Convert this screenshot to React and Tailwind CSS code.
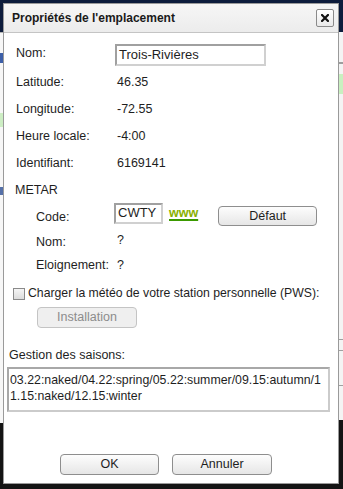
const btn =
  "flex items-center justify-center rounded-[4px] border border-[#8e8e8e] bg-gradient-to-b from-[#fdfdfd] to-[#e6e6e6] text-[12.5px] text-[#1e1e1e]";

const Row = ({ label, value, indent = "pl-[12px]", width = "w-[101px]" }) => (
  <div className={`flex h-[27px] leading-[18px] ${indent}`}>
    <div className={width}>{label}</div>
    <div>{value}</div>
  </div>
);

const LeftStrip = () => (
  <div className="w-[3px] flex flex-col">
    <div className="h-[29px] bg-[#0d1c3c]" />
    <div className="h-[1px] bg-[#b5b5b5]" />
    <div className="h-[20px] bg-[#f7f7f7]" />
    <div className="h-[10px] bg-[#3d5fa8]" />
    <div className="h-[50px] bg-[#f7f7f7]" />
    <div className="h-[14px] bg-[#cdeec4]" />
    <div className="h-[60px] bg-[#f7f7f7]" />
    <div className="h-[8px] bg-[#5570a8]" />
    <div className="h-[228px] bg-[#f7f7f7]" />
    <div className="flex-1 bg-[#141414]" />
  </div>
);

const RightStrip = () => (
  <div className="w-[4px] flex flex-col">
    <div className="h-[29px] bg-[#0d1c3c]" />
    <div className="h-[30px] bg-[#f4f4f4]" />
    <div className="h-[2px] bg-[#9e9e9e]" />
    <div className="h-[10px] bg-[#f4f4f4]" />
    <div className="h-[20px] bg-[#c9f0c0]" />
    <div className="h-[245px] bg-[#f4f4f4]" />
    <div className="h-[1px] bg-[#a0a0a0]" />
    <div className="h-[10px] bg-[#f4f4f4]" />
    <div className="h-[1px] bg-[#a0a0a0]" />
    <div className="h-[34px] bg-[#f4f4f4]" />
    <div className="h-[1px] bg-[#a0a0a0]" />
    <div className="h-[34px] bg-[#f4f4f4]" />
    <div className="flex-1 bg-[#141414]" />
  </div>
);

const Dialog = () => (
  <div className="w-[336px] h-[481px] border border-[#9a9a9a] bg-white flex flex-col text-[12.5px] text-[#1e1e1e]">
    <div className="h-[29px] shrink-0 flex items-center justify-between pl-[8px] pr-[4px] bg-gradient-to-b from-[#f6f6f6] to-[#ececec] border-b border-[#c4c4c4]">
      <span className="text-[12px] font-bold text-[#1a1a1a]">Propriétés de l'emplacement</span>
      <button className="w-[18px] h-[18px] mb-[1px] flex items-center justify-center rounded-[2px] border border-[#8a8a8a] bg-gradient-to-b from-white to-[#e9e9e9]">
        <svg width="8" height="8" viewBox="0 0 8 8">
          <path d="M1 1 L7 7 M7 1 L1 7" stroke="#111" strokeWidth="2.2" strokeLinecap="square" />
        </svg>
      </button>
    </div>

    <div className="flex flex-col">
      <div className="flex h-[22px] mt-[11px] pl-[12px]">
        <div className="w-[99px] leading-[18px]">Nom:</div>
        <div className="w-[151px] h-[22px] border-2 border-t-[#a0a0a0] border-l-[#a0a0a0] border-b-[#d0d0d0] border-r-[#d0d0d0] pl-[2px] text-[13px] leading-[18px]">
          Trois-Rivières
        </div>
      </div>

      <div className="mt-[7px]">
        <Row label="Latitude:" value="46.35" />
        <Row label="Longitude:" value="-72.55" />
        <Row label="Heure locale:" value="-4:00" />
        <Row label="Identifiant:" value="6169141" />
        <div className="h-[18px] leading-[18px] pl-[11px]">METAR</div>
      </div>

      <div className="flex h-[21px] mt-[4px] pl-[32px]">
        <div className="w-[78px] leading-[18px] pt-[5px]">Code:</div>
        <div className="w-[49px] h-[21px] border-2 border-t-[#a0a0a0] border-l-[#a0a0a0] border-b-[#d0d0d0] border-r-[#d0d0d0] pl-[2px] text-[13px] leading-[15px]">
          CWTY
        </div>
        <a className="ml-[6px] leading-[20px] font-bold text-[#8ab000] underline decoration-[#3b9a00] decoration-2 underline-offset-2">
          www
        </a>
        <button className={`${btn} ml-[20px] mt-[3px] w-[99px] h-[20px]`}>Défaut</button>
      </div>

      <div className="flex h-[18px] mt-[9px] pl-[32px] leading-[18px]">
        <div className="w-[81px]">Nom:</div>
        <div className="-mt-[2px]">?</div>
      </div>
      <div className="flex h-[18px] mt-[5px] pl-[32px] leading-[18px]">
        <div className="w-[81px]">Eloignement:</div>
        <div>?</div>
      </div>

      <div className="flex items-center h-[18px] mt-[10px] pl-[9px] leading-[18px]">
        <div className="w-[12px] h-[12px] mt-[1px] border border-[#8a8a8a] bg-gradient-to-b from-[#f5f5f5] to-[#dcdcdc]" />
        <span className="ml-[3px] text-[12.25px]">Charger la météo de votre station personnelle (PWS):</span>
      </div>

      <div className="mt-[5px] ml-[33px]">
        <button className="flex items-center justify-center w-[100px] h-[21px] rounded-[4px] border border-[#c4c4c4] bg-[#efefef] text-[12.5px] text-[#8c8c8c]">
          Installation
        </button>
      </div>

      <div className="h-[18px] leading-[18px] mt-[18px] pl-[5px]">Gestion des saisons:</div>
      <div className="w-[323px] h-[45px] mt-[3px] ml-[3px] border-2 border-t-[#a8a8a8] border-l-[#a8a8a8] border-b-[#cbcbcb] border-r-[#cbcbcb] pl-[1px] pt-[3px] text-[12.35px] leading-[16px] text-[#1e1e1e]">
        03.22:naked/04.22:spring/05.22:summer/09.15:autumn/1
        <br />
        1.15:naked/12.15:winter
      </div>

      <div className="flex gap-[13px] mt-[42px] ml-[56px]">
        <button className={`${btn} w-[99px] h-[21px]`}>OK</button>
        <button className={`${btn} w-[100px] h-[21px]`}>Annuler</button>
      </div>
    </div>
  </div>
);

export default function App() {
  return (
    <div
      className="w-[343px] h-[489px] flex flex-col bg-[#141414] overflow-hidden"
      style={{ fontFamily: '"Liberation Sans", Arial, sans-serif' }}
    >
      <div className="h-[3px] shrink-0 bg-[#0d1c3c]" />
      <div className="flex h-[481px] shrink-0">
        <LeftStrip />
        <Dialog />
        <RightStrip />
      </div>
      <div className="flex-1 bg-[#141414]" />
    </div>
  );
}
